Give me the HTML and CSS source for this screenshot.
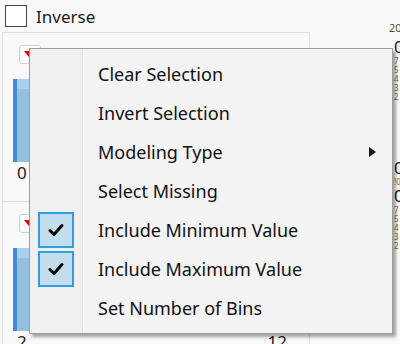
FILE: index.html
```html
<!DOCTYPE html>
<html lang="en">
<head>
<meta charset="UTF-8">
<title>Filter Options</title>
<link rel="stylesheet" href="styles.css">
</head>
<body>
<div class="page">
    <div class="main">
        <label class="inverse">
            <span class="box"></span>
            <span>Inverse</span>
        </label>
        <div class="panel">
            <div class="card">
                <span class="hot"></span>
                <div class="bar"></div>
                <div class="ticks"><span>0</span></div>
            </div>
            <div class="card">
                <span class="hot"></span>
                <div class="bar"></div>
                <div class="ticks"><span>2</span><span>12</span></div>
            </div>
        </div>
    </div>
    <div class="axis">
        <div class="year">20</div>
        <div class="big">0</div>
        <div class="small">7<br>5<br>4<br>3<br>2</div>
        <div class="big low">0</div>
        <div class="small">!0</div>
        <div class="big">0</div>
        <div class="small">7<br>5<br>4<br>3<br>2</div>
        <div class="big end">10</div>
    </div>
</div>

<div class="menu">
    <div class="item"><span class="gutter"></span><span class="label">Clear Selection</span></div>
    <div class="item"><span class="gutter"></span><span class="label">Invert Selection</span></div>
    <div class="item"><span class="gutter"></span><span class="label">Modeling Type</span><span class="arrow"></span></div>
    <div class="item"><span class="gutter"></span><span class="label">Select Missing</span></div>
    <div class="item">
        <span class="gutter"><span class="check"><svg width="16" height="14" viewBox="0 0 16 14"><path d="M2 7.5 L6 11.5 L14 2.5" fill="none" stroke="#000" stroke-width="3" stroke-linecap="round" stroke-linejoin="round"/></svg></span></span>
        <span class="label">Include Minimum Value</span>
    </div>
    <div class="item">
        <span class="gutter"><span class="check"><svg width="16" height="14" viewBox="0 0 16 14"><path d="M2 7.5 L6 11.5 L14 2.5" fill="none" stroke="#000" stroke-width="3" stroke-linecap="round" stroke-linejoin="round"/></svg></span></span>
        <span class="label">Include Maximum Value</span>
    </div>
    <div class="item"><span class="gutter"></span><span class="label">Set Number of Bins</span></div>
</div>
</body>
</html>
```

FILE: styles.css
```css
body {
    margin: 0;
    background-color: #f9f9f9;
    font-family: 'Noto Sans', 'Open Sans', sans-serif;
    color: #1a1a1a;
    overflow: hidden;
}
.page {
    display: flex;
    width: 400px;
    height: 344px;
    overflow: hidden;
}
.main {
    width: 310px;
    flex-shrink: 0;
}
.inverse {
    display: flex;
    align-items: center;
    gap: 9px;
    height: 32px;
    padding-left: 5px;
    font-size: 17px;
}
.box {
    width: 20px;
    height: 20px;
    border: 1.5px solid #444;
    background: #fff;
}
.panel {
    margin-left: 2px;
    border-top: 1px solid #dedede;
    border-left: 1px solid #dedede;
    border-right: 1px solid #dedede;
    height: 320px;
}
.card {
    padding: 12px 0 0 10px;
    height: 156px;
    border-bottom: 1px solid #dcdcdc;
    width: 26px;
}
.card + .card {
    border-bottom: none;
    width: auto;
}
.hot {
    display: block;
    margin-left: 6px;
    width: 20px;
    height: 17px;
    border: 1px solid #cfcfcf;
    border-radius: 3px;
    background: #fff;
    position: relative;
}
.hot::after {
    content: "";
    position: absolute;
    left: 4px;
    top: 5px;
    border-left: 5px solid transparent;
    border-right: 5px solid transparent;
    border-top: 6px solid #e00000;
}
.bar {
    margin-top: 15px;
    width: 17px;
    height: 83px;
    background: linear-gradient(#aacff0 0 10px, #96bfdc 10px);
    border-left: 4px solid #3d8fdc;
    box-sizing: border-box;
}
.ticks {
    display: flex;
    justify-content: space-between;
    font-size: 17px;
    line-height: 22px;
    padding-left: 4px;
}
.card + .card .ticks {
    width: 270px;
}
.axis {
    padding-left: 84px;
    font-size: 17px;
    line-height: 18px;
    white-space: nowrap;
}
.year {
    font-size: 11px;
    margin: 19px 0 0 -5px;
    color: #5a4a2a;
}
.big {
    margin-top: 1px;
}
.small {
    font-size: 8px;
    line-height: 9px;
    color: #8a6a2a;
}
.low {
    margin-top: 58px;
}
.end {
    margin: 120px 0 0 -8px;
}
.menu {
    position: absolute;
    left: 29px;
    top: 48px;
    width: 362px;
    height: 279px;
    padding: 5px 0 0;
    border: 1px solid #9c9c9c;
    background: linear-gradient(to right, #f0f0f0 52px, #e2e2e2 52px 53px, #fcfcfc 53px 54px, #f3f3f3 54px);
    box-shadow: 3px 3px 3px rgba(0, 0, 0, 0.35);
    font-size: 18px;
    color: #111;
}
.item {
    display: flex;
    align-items: center;
    height: 39px;
    position: relative;
}
.gutter {
    width: 54px;
    height: 100%;
    display: flex;
    align-items: center;
    flex-shrink: 0;
}
.label {
    padding-left: 14px;
}
.check {
    margin-left: 8px;
    width: 32px;
    height: 32px;
    border: 2px solid #2f9fe0;
    background: #c2deee;
    display: flex;
    align-items: center;
    justify-content: center;
}
.arrow {
    position: absolute;
    right: 16px;
    top: 15px;
    border-top: 5px solid transparent;
    border-bottom: 5px solid transparent;
    border-left: 7px solid #111;
}
```
